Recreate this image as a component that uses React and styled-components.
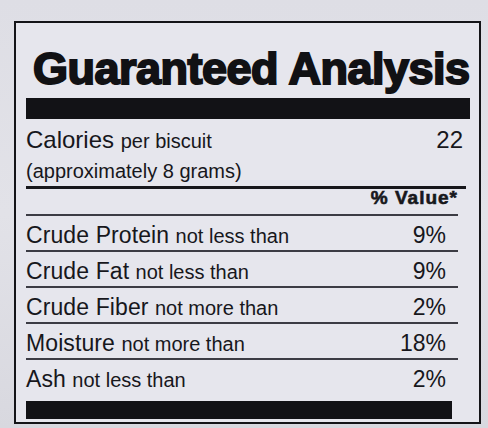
import React from "react";
import styled, { createGlobalStyle } from "styled-components";

const GlobalStyle = createGlobalStyle`
  html, body {
    margin: 0;
    padding: 0;
    background: #dcdce3;
  }
  body {
    font-family: "Liberation Sans", Arial, sans-serif;
    color: #17171c;
  }
`;

const Page = styled.div`
  width: 488px;
  height: 428px;
  box-sizing: border-box;
  padding: 21px 7px 4px 14px;
  background: linear-gradient(180deg, #dedee5 0%, #e2e2e8 50%, #d8d8df 100%);
`;

const Label = styled.div`
  box-sizing: border-box;
  height: 403px;
  border: 2px solid #141418;
  background: #e6e6ed;
  padding: 0 9px 0 10px;
  display: flex;
  flex-direction: column;
`;

const Title = styled.h1`
  margin: 23px 0 0;
  padding-left: 7px;
  font-size: 45px;
  line-height: 45px;
  font-weight: 700;
  letter-spacing: -0.5px;
  -webkit-text-stroke: 2px #111114;
  color: #111114;
  white-space: nowrap;
`;

const Bar = styled.div`
  height: ${(p) => p.$h}px;
  margin: ${(p) => p.$top}px ${(p) => p.$right || 0}px 0 0;
  background: #121216;
`;

const Serving = styled.div`
  margin: 6px 4px 0 0;
  font-size: 24px;
  line-height: 30px;
  border-bottom: 3px solid #17171c;
`;

const ServingLine = styled.div`
  display: flex;
  justify-content: space-between;
  align-items: baseline;
  padding-right: 3px;
`;

const Small = styled.span`
  font-size: 20px;
`;

const Table = styled.div`
  margin-right: 12px;
  display: flex;
  flex-direction: column;
`;

const HeadRow = styled.div`
  text-align: right;
  font-size: 19px;
  line-height: 18px;
  padding: 0 0 7px;
  font-weight: 700;
  letter-spacing: 1px;
  -webkit-text-stroke: 0.6px #17171c;
  border-bottom: 2px solid #3c3c44;
`;

const Row = styled.div`
  display: flex;
  justify-content: space-between;
  align-items: baseline;
  font-size: 23px;
  line-height: 26px;
  padding: 6px 12px 1px 0;
  border-bottom: ${(p) => (p.$last ? "0" : "2px solid #3c3c44")};
`;

const Nutrient = styled.span`
  letter-spacing: 0.1px;
`;

const Qualifier = styled.span`
  font-size: 20px;
`;

const Amount = styled.span`
  font-size: 23px;
`;

const rows = [
  ["Crude Protein", "not less than", "9%"],
  ["Crude Fat", "not less than", "9%"],
  ["Crude Fiber", "not more than", "2%"],
  ["Moisture", "not more than", "18%"],
  ["Ash", "not less than", "2%"],
];

export default function App() {
  return (
    <>
      <GlobalStyle />
      <Page>
        <Label>
          <Title>Guaranteed Analysis</Title>
          <Bar $h={21} $top={7} />
          <Serving>
            <ServingLine>
              <span>
                Calories <Small>per biscuit</Small>
              </span>
              <span>22</span>
            </ServingLine>
            <ServingLine>
              <Small>(approximately 8 grams)</Small>
            </ServingLine>
          </Serving>
          <Table>
            <HeadRow>% Value*</HeadRow>
            {rows.map(([name, qual, val], i) => (
              <Row key={name} $last={i === rows.length - 1}>
                <span>
                  <Nutrient>{name}</Nutrient> <Qualifier>{qual}</Qualifier>
                </span>
                <Amount>{val}</Amount>
              </Row>
            ))}
          </Table>
          <Bar $h={18} $top={7} $right={18} />
        </Label>
      </Page>
    </>
  );
}
